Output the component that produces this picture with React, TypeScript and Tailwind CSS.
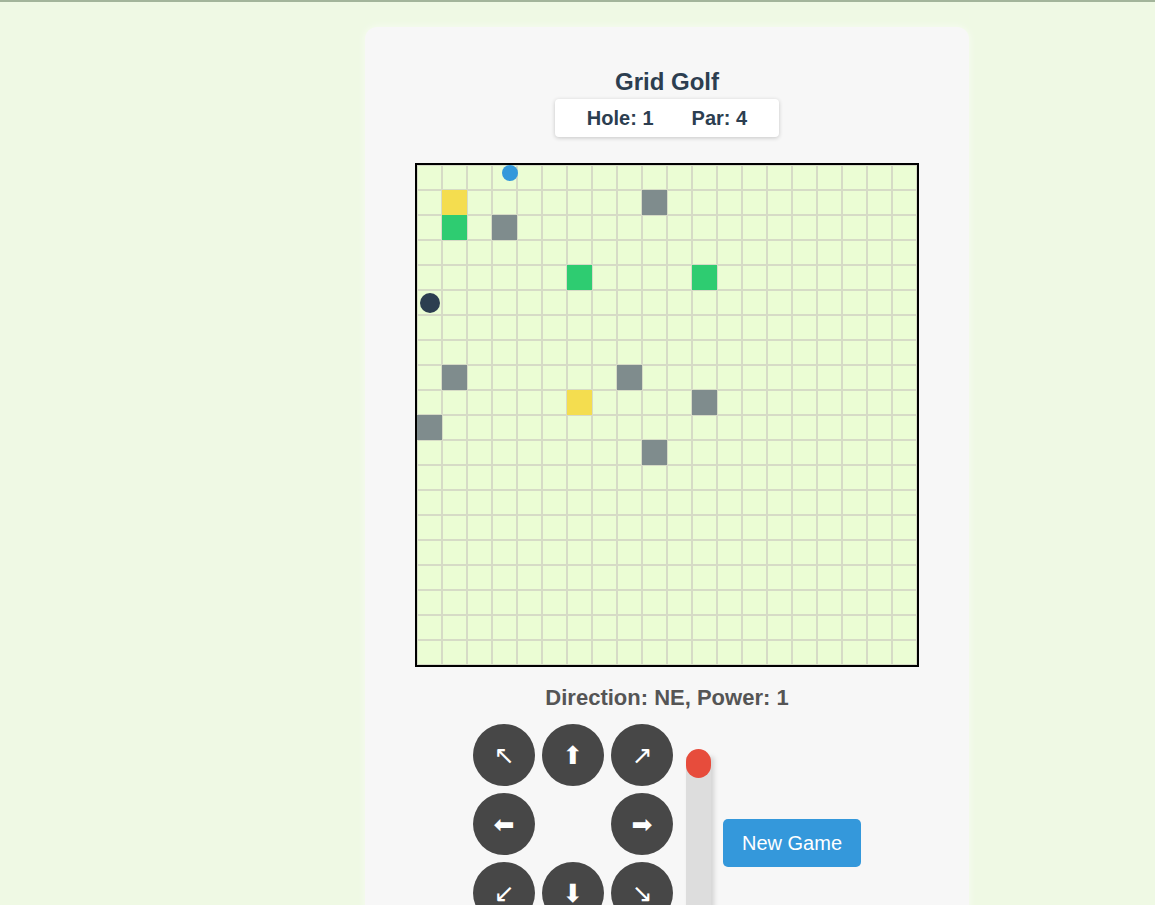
import React from 'react';

const SIZE = 20;

// cell types keyed "col,row"
const tiles: Record<string, 'sand' | 'green' | 'rock'> = {
  '1,1': 'sand',
  '6,9': 'sand',
  '1,2': 'green',
  '6,4': 'green',
  '11,4': 'green',
  '9,1': 'rock',
  '3,2': 'rock',
  '1,8': 'rock',
  '8,8': 'rock',
  '11,9': 'rock',
  '0,10': 'rock',
  '9,11': 'rock',
};

const tileClass = {
  sand: 'bg-[#f4dd4f] border-transparent',
  green: 'bg-[#2ecc71] border-transparent',
  rock: 'bg-[#7f8c8d] border-transparent',
};

const player = { x: 0, y: 5 };

const arrows = ['↖', '⬆', '↗', '⬅', '', '➡', '↙', '⬇', '↘'];

function Board() {
  const cells = [];
  for (let r = 0; r < SIZE; r++) {
    for (let c = 0; c < SIZE; c++) {
      const t = tiles[`${c},${r}`];
      cells.push(
        <div
          key={`${c}-${r}`}
          className={`w-[25px] h-[25px] border flex items-center justify-center ${
            t ? tileClass[t] : 'bg-[#ebfdd4] border-[#d6dbc6]'
          }`}
        >
          {player.x === c && player.y === r && <div className="w-5 h-5 rounded-full bg-[#2c3e50]" />}
        </div>
      );
    }
  }
  return (
    <div className="border-2 border-black w-[504px]">
      <div className="relative grid grid-cols-[repeat(20,25px)]">
        {cells}
        {/* hole marker */}
        <div className="absolute left-[85px] top-0 w-[16px] h-[16px] rounded-full bg-[#3498db]" />
      </div>
    </div>
  );
}

export default function App() {
  return (
    <div className="min-h-screen bg-[#eff9e4] border-t-2 border-[#a3b59b] font-['Liberation_Sans',Arial,sans-serif]">
      <div className="pt-[25px] pl-[365px] pb-10">
        <div className="w-[604px] bg-[#f7f7f7] rounded-xl shadow-[0_0_8px_rgba(255,255,255,0.6)] pt-[41px] pb-8 flex flex-col items-center">
          <h1 className="text-[24px] leading-[28px] font-bold text-[#2c3e50]">Grid Golf</h1>
          <div className="mt-[3px] flex gap-[38px] px-8 py-2 bg-white rounded shadow-[0_1px_4px_rgba(0,0,0,0.2)] text-[20px] leading-[22px] font-bold text-[#2c3e50]">
            <span>Hole: 1</span>
            <span>Par: 4</span>
          </div>

          <div className="mt-[26px]">
            <Board />
          </div>

          <div className="mt-[18px] text-[22px] leading-[25px] font-bold text-[#555]">Direction: NE, Power: 1</div>

          <div className="mt-[14px] flex items-start">
            <div className="grid grid-cols-[repeat(3,62px)] gap-[7px]">
              {arrows.map((a, i) =>
                a ? (
                  <button
                    key={i}
                    className="w-[62px] h-[62px] rounded-full bg-[#474747] text-white text-[25px] leading-none flex items-center justify-center font-['DejaVu_Sans',sans-serif]"
                  >
                    {a}
                  </button>
                ) : (
                  <div key={i} />
                )
              )}
            </div>

            <div className="ml-[13px] mt-[25px] relative w-[25px] h-[190px]">
              <div className="absolute left-0 top-[8px] bottom-0 w-[25px] bg-[#dddddd] shadow-[3px_0_5px_rgba(0,0,0,0.15)]" />
              <div className="absolute left-0 top-0 w-[25px] h-[29px] rounded-full bg-[#e74c3c]" />
            </div>

            <button className="ml-[12px] mt-[95px] w-[138px] h-[48px] rounded-[5px] bg-[#3498db] text-white text-[20px]">
              New Game
            </button>
          </div>
        </div>
      </div>
    </div>
  );
}
